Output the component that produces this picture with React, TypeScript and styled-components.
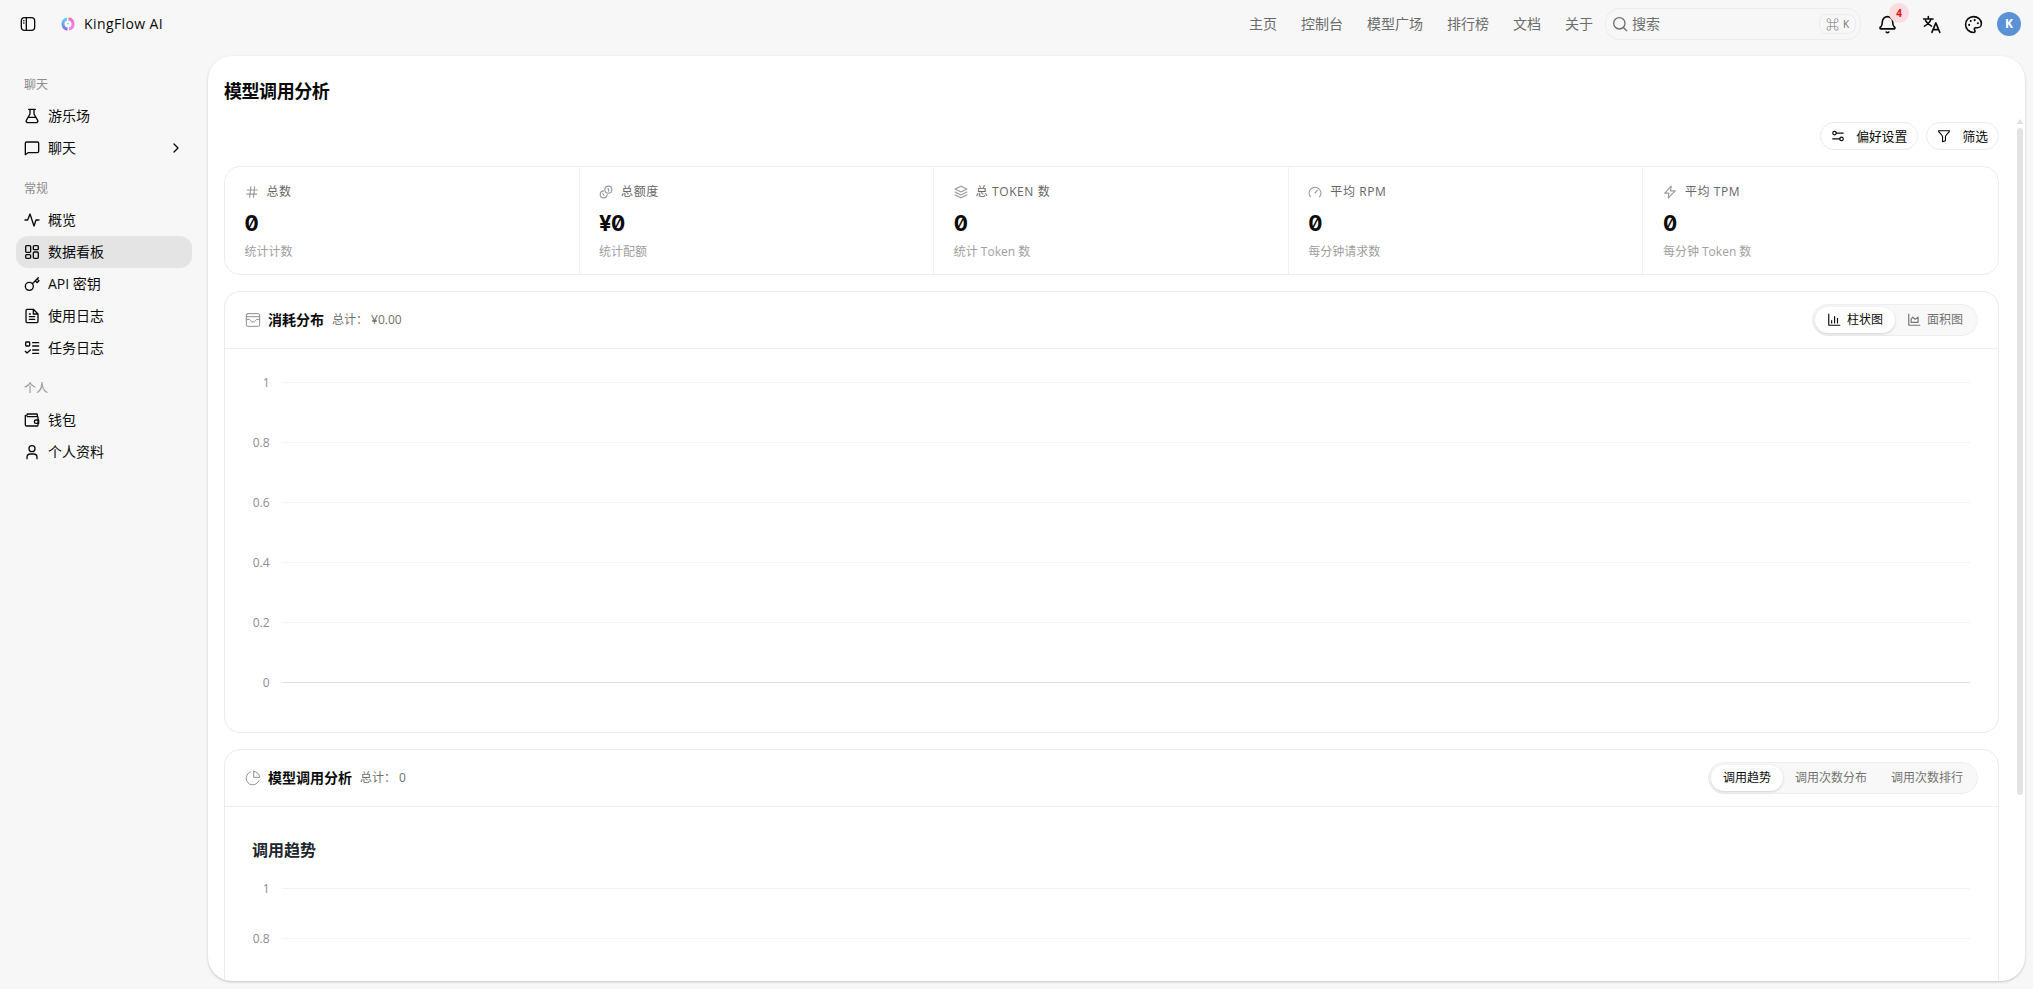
import React from 'react';
import styled, { createGlobalStyle } from 'styled-components';

const Global = createGlobalStyle`
  *{box-sizing:border-box}
  body{margin:0;background:#f7f7f7;color:#0a0a0a;font:14px/20px "Open Sans","Noto Sans CJK SC",sans-serif}
`;
const Shell = styled.div`
  width: 2033px;
  height: 989px;
  overflow: hidden;
  display: flex;
  flex-direction: column;
`;
const Header = styled.header`
  height: 48px;
  display: flex;
  align-items: center;
  padding: 0 12px 0 20px;
`;
const Brand = styled.div`
  display: flex;
  align-items: center;
  gap: 9px;
  margin-left: 25px;
  letter-spacing: 0.4px;
`;
const Nav = styled.nav`
  margin-left: auto;
  display: flex;
  gap: 24px;
  color: #6b6b6b;
`;
const Search = styled.div`
  display: flex;
  align-items: center;
  width: 256px;
  height: 32px;
  margin-left: 12px;
  padding: 0 4px 0 6px;
  gap: 4px;
  border: 1px solid #ececec;
  border-radius: 14px;
  color: #6f6f6f;
`;
const Kbd = styled.span`
  margin-left: auto;
  display: flex;
  align-items: center;
  justify-content: center;
  gap: 4px;
  width: 37px;
  height: 20px;
  border: 1px solid #ececec;
  border-radius: 8px;
  font-size: 10px;
`;
const Command = styled.span`
  font-size: 13px;
`;
const IconButton = styled.span<{ $w: number }>`
  position: relative;
  width: ${(p) => p.$w}px;
  display: flex;
  justify-content: center;
`;
const Badge = styled.span`
  position: absolute;
  left: 28px;
  top: -12px;
  width: 20px;
  height: 20px;
  border-radius: 50%;
  background: #f8dcdf;
  color: #e00b1b;
  font-size: 10px;
  font-weight: 700;
  text-align: center;
`;
const Avatar = styled.span`
  width: 24px;
  height: 24px;
  border-radius: 50%;
  background: #5b92d6;
  color: #fff;
  font-weight: 700;
  font-size: 12px;
  line-height: 24px;
  text-align: center;
`;
const Body = styled.div`
  flex: 1;
  display: flex;
  min-height: 0;
`;
const Sidebar = styled.aside`
  width: 208px;
  padding: 20px 16px;
  display: flex;
  flex-direction: column;
  gap: 8px;
`;
const GroupLabel = styled.div`
  height: 32px;
  line-height: 34px;
  padding-left: 8px;
  font-size: 12px;
  color: #8c8c8c;
`;
const MenuItem = styled.div<{ $active?: boolean }>`
  display: flex;
  align-items: center;
  gap: 8px;
  height: 32px;
  padding: 0 8px;
  border-radius: 12px;
  background: ${(p) => (p.$active ? '#e4e4e4' : 'transparent')};
  & > :nth-child(3) { margin-left: auto; }
`;
const Panel = styled.main`
  position: relative;
  width: 1817px;
  height: 925px;
  margin-top: 8px;
  border-radius: 24px;
  background: #fff;
  box-shadow: 0 1px 3px rgba(0, 0, 0, 0.14), 0 1px 2px rgba(0, 0, 0, 0.08);
  overflow: hidden;
  padding: 19px 26px 0 16px;
`;
const Title = styled.h1`
  margin: 0;
  font-size: 18px;
  line-height: 32px;
  font-weight: 700;
  letter-spacing: -0.45px;
`;
const Actions = styled.div`
  display: flex;
  justify-content: flex-end;
  gap: 7.500px;
  margin-top: 15px;
`;
const ActionButton = styled.span`
  height: 28px;
  display: flex;
  align-items: center;
  gap: 11.500px;
  padding: 0 10px;
  border: 1px solid #ebebeb;
  border-radius: 14px;
  font-size: 12.8px;
`;
const Stats = styled.section`
  display: grid;
  grid-template-columns: repeat(5, 1fr);
  height: 109px;
  margin-top: 16px;
  border: 1px solid #ededed;
  border-radius: 16px;
`;
const Stat = styled.div`
  padding: 15px 20px 0 19.500px;
  &:not(:last-child) { border-right: 1px solid #f1f1f1; }
`;
const StatLabel = styled.div`
  display: flex;
  align-items: center;
  gap: 8px;
  font-size: 12px;
  letter-spacing: 0.6px;
  color: #666;
  svg { color: #9a9a9a; }
`;
const StatValue = styled.div`
  margin-top: 7px;
  font: 700 22px/28px Inter, sans-serif;
  font-variant-numeric: tabular-nums slashed-zero;
  letter-spacing: -0.55px;
`;
const StatHint = styled.div`
  margin-top: 5px;
  font-size: 12px;
  color: #a0a0a0;
`;
const Card = styled.section<{ $h: number }>`
  height: ${(p) => p.$h}px;
  margin-top: 16px;
  border: 1px solid #ebebeb;
  border-radius: 16px;
`;
const CardHead = styled.div`
  height: 57px;
  display: flex;
  align-items: center;
  padding: 0 20px 0 19.500px;
  border-bottom: 1px solid #efefef;
  svg { color: #8f8f8f; }
`;
const CardTitle = styled.b`
  margin: 0 8px 0 7.500px;
`;
const Total = styled.span`
  font-size: 12px;
  color: #6f6f6f;
`;
const Tabs = styled.div`
  margin-left: auto;
  display: flex;
  height: 32px;
  padding: 2px;
  border: 1px solid #eee;
  border-radius: 16px;
  background: #f8f8f8;
`;
const Tab = styled.span<{ $active?: boolean }>`
  display: flex;
  align-items: center;
  gap: 6px;
  padding: 0 12px;
  border-radius: 14px;
  font-size: 12px;
  color: ${(p) => (p.$active ? '#0a0a0a' : '#737373')};
  background: ${(p) => (p.$active ? '#fff' : 'transparent')};
  box-shadow: ${(p) => (p.$active ? '0 1px 3px rgba(0,0,0,.16)' : 'none')};
  svg { color: currentColor; }
`;
const ChartTitle = styled.div`
  margin: 31px 0 0 27px;
  font-size: 16px;
  line-height: 24px;
  font-weight: 700;
  color: #21252c;
`;
const Axis = styled.div<{ $top: number }>`
  padding: ${(p) => p.$top}px 28px 0 20px;
`;
const AxisRow = styled.div<{ $h: number }>`
  height: ${(p) => p.$h}px;
  display: flex;
  align-items: center;
  gap: 12px;
  font-size: 12px;
  color: #8b8d92;
`;
const Tick = styled.span`
  width: 24.500px;
  padding-top: 1px;
  text-align: right;
`;
const GridLine = styled.i<{ $base?: boolean }>`
  flex: 1;
  height: 1px;
  background: ${(p) => (p.$base ? '#dedfe1' : '#f3f3f4')};
`;
const Scrollbar = styled.div`
  position: absolute;
  right: 2px;
  top: 63px;
  width: 6px;
  display: flex;
  flex-direction: column;
  align-items: center;
  gap: 4px;
`;
const ArrowUp = styled.i`
  border: 3px solid transparent;
  border-top: 0;
  border-bottom: 5px solid #dedede;
`;
const Thumb = styled.i`
  width: 6px;
  height: 667px;
  border-radius: 3px;
  background: #e3e3e3;
`;

/* 24-unit outline icons */
const shapes: Record<string, React.ReactNode> = {
  panel: <><rect x="2" y="2.500" width="20" height="19" rx="5" /><path d="M9.500 3v18M5.500 7h.5M5.500 10.500h.5" /></>,
  flask: <path d="M7 2h10M9 2v7L3.500 18.500C2.700 20.200 3.600 22 5.500 22h13c1.900 0 2.800-1.800 2-3.500L15 9V2M6.500 14h11" />,
  chat: <path d="M2 22V5a2 2 0 0 1 2-2h16a2 2 0 0 1 2 2v12a2 2 0 0 1-2 2H6z" />,
  chevron: <path d="m9 6 6 6-6 6" />,
  pulse: <path d="M1.500 12h4L9 3l6 18 3-9h4.500" />,
  dash: <><rect x="2.500" y="2.500" width="7.500" height="10" rx="1.500" /><rect x="14" y="2.500" width="7.500" height="6" rx="1.500" /><rect x="14" y="12" width="7.500" height="9.500" rx="1.500" /><rect x="2.500" y="16" width="7.500" height="5.500" rx="1.500" /></>,
  key: <><circle cx="8" cy="15.500" r="6" /><path d="m12.500 11.500 9-9M17 7l2.500 3L22.500 7 19.500 4.500" /></>,
  file: <path d="M14 2H5a2 2 0 0 0-2 2v16a2 2 0 0 0 2 2h14a2 2 0 0 0 2-2V9zM14 2v7h7M8 9h1.500M8 13h8M8 17h8" />,
  todo: <><rect x="2.500" y="3" width="6" height="6" rx="1" /><path d="m2 17 2.500 2.500L9.500 15M13 4h9M13 9h9M13 15h9M13 20h9" /></>,
  wallet: <><path d="M20 7V4a1 1 0 0 0-1-1H5a3 3 0 0 0 0 4h15a1 1 0 0 1 1 1v12a1 1 0 0 1-1 1H4a2 2 0 0 1-2-2V5" /><path d="M22 12h-4a2.500 2.500 0 0 0 0 5h4z" /></>,
  user: <><circle cx="12" cy="7" r="4.500" /><path d="M4.500 22v-2a5 5 0 0 1 5-5h5a5 5 0 0 1 5 5v2" /></>,
  search: <><circle cx="11" cy="11" r="8.500" /><path d="m17.500 17.500 4.500 4.500" /></>,
  bell: <path d="M10.300 21.500a2.500 2.500 0 0 0 3.400 0M3.300 15.300A1 1 0 0 0 4 17.500h16a1 1 0 0 0 .7-2.200C19.400 14 18.500 12.500 18.500 8.500a6.500 6.500 0 0 0-13 0c0 4-.9 5.500-2.200 6.800" />,
  lang: <path d="M2 5h12M8 2v3M11.500 5C10 9 7 12 3 14M4.500 7c1.500 3 4 5 7.500 7M12.500 22l5-12 5 12M14 18.500h7" />,
  palette: <><path d="M12 22a1 1 0 0 1 0-20c5.500 0 10 4 10 9a5 5 0 0 1-5 5h-2.250a1.750 1.750 0 0 0-1.400 2.800l.3.400A1.750 1.750 0 0 1 12 22z" /><path d="M13.500 6.500h.01M17.500 10.500h.01M6.500 12.500h.01M8.500 7.500h.01" strokeWidth="2.600" /></>,
  sliders: <><circle cx="6" cy="7" r="3" /><path d="M9 7h12M3 17h12" /><circle cx="18" cy="17" r="3" /></>,
  filter: <path d="M2.500 3h19c0 3-7 7-7 10v7l-5 2v-9c0-3-7-7-7-10z" />,
  hash: <path d="M4 8.500h17M3 15.500h17M10 3 8 21M16.500 3l-2 18" />,
  coins: <><circle cx="16" cy="8" r="6" /><path d="M15 6.500h1.500v4M8 10a6 6 0 1 0 6 7M6.500 14.500l2 3" /></>,
  layers: <path d="m12 2 10 5-10 5L2 7zM2 12l10 5 10-5M2 17l10 5 10-5" />,
  gauge: <path d="M4 20a10 10 0 1 1 16 0M12 14l4-5" />,
  zap: <path d="M14 2 3 14h7l-1 8 12-12h-8z" />,
  inbox: <><rect x="2" y="2.500" width="20" height="19" rx="2" /><path d="M2 7h20M2 11h4c2 0 2 4 6 4s4-4 6-4h4" /></>,
  bars: <path d="M3 2v18a1 1 0 0 0 1 1h18M8 17v-4M13 17V6M18 17V9" />,
  area: <path d="M3 2v18a1 1 0 0 0 1 1h18M7 16v-5l3-4 4 4 5-4v9z" />,
  pie: <path d="M8 3a10 10 0 1 0 13 13M13 2v9h9a9.500 9.500 0 0 0-9-9z" />,
};
const Glyph = ({ name, size = 16, stroke = 2 }: { name: string; size?: number; stroke?: number }) => (
  <svg width={size} height={size} viewBox="0 0 24 24" fill="none" stroke="currentColor" strokeWidth={stroke} strokeLinecap="round" strokeLinejoin="round">
    {shapes[name]}
  </svg>
);

const Logo = () => (
  <svg width="14" height="14" viewBox="0 0 14 14" fill="none" strokeWidth="3">
    <defs>
      <linearGradient id="cool" x1="0" y1="0" x2="0" y2="1"><stop stopColor="#54d3f5" /><stop offset="1" stopColor="#8a6cf0" /></linearGradient>
      <linearGradient id="warm" x1="0" y1="0" x2="0" y2="1"><stop stopColor="#f472b8" /><stop offset="1" stopColor="#e58af0" /></linearGradient>
    </defs>
    <path d="M6 2C3.500 2.300 2 4.600 2 7s1.600 4.600 4.500 5.300" stroke="url(#cool)" />
    <path d="M7.500 1.700C10.400 2.200 12 4.500 12 7s-1.500 4.700-4 5" stroke="url(#warm)" />
    <circle cx="7" cy="6.800" r="0.800" fill="#62c8ef" />
  </svg>
);

const groups = [
  { label: '聊天', items: [['flask', '游乐场'], ['chat', '聊天']] },
  { label: '常规', items: [['pulse', '概览'], ['dash', '数据看板'], ['key', 'API 密钥'], ['file', '使用日志'], ['todo', '任务日志']] },
  { label: '个人', items: [['wallet', '钱包'], ['user', '个人资料']] },
];
const stats = [
  ['hash', '总数', '0', '统计计数'],
  ['coins', '总额度', '¥0', '统计配额'],
  ['layers', '总 TOKEN 数', '0', '统计 Token 数'],
  ['gauge', '平均 RPM', '0', '每分钟请求数'],
  ['zap', '平均 TPM', '0', '每分钟 Token 数'],
];
const ticks = ['1', '0.8', '0.6', '0.4', '0.2', '0'];

const Chart = ({ top, step, values }: { top: number; step: number; values: string[] }) => (
  <Axis $top={top}>
    {values.map((v) => (
      <AxisRow key={v} $h={step}><Tick>{v}</Tick><GridLine $base={v === '0'} /></AxisRow>
    ))}
  </Axis>
);

export default function App() {
  return (
    <Shell>
      <Global />
      <Header>
        <Glyph name="panel" />
        <Brand><Logo />KingFlow AI</Brand>
        <Nav>{['主页', '控制台', '模型广场', '排行榜', '文档', '关于'].map((t) => <span key={t}>{t}</span>)}</Nav>
        <Search><Glyph name="search" />搜索<Kbd><Command>⌘</Command><span>K</span></Kbd></Search>
        <IconButton $w={52}><Glyph name="bell" size={19} /><Badge>4</Badge></IconButton>
        <IconButton $w={36}><Glyph name="lang" size={19} /></IconButton>
        <IconButton $w={48}><Glyph name="palette" size={19} /></IconButton>
        <Avatar>K</Avatar>
      </Header>
      <Body>
        <Sidebar>
          {groups.map((g) => (
            <div key={g.label}>
              <GroupLabel>{g.label}</GroupLabel>
              {g.items.map(([icon, text]) => (
                <MenuItem key={text} $active={icon === 'dash'}>
                  <Glyph name={icon} /><span>{text}</span>{icon === 'chat' && <Glyph name="chevron" />}
                </MenuItem>
              ))}
            </div>
          ))}
        </Sidebar>
        <Panel>
          <Title>模型调用分析</Title>
          <Actions>
            <ActionButton><Glyph name="sliders" size={14} />偏好设置</ActionButton>
            <ActionButton><Glyph name="filter" size={14} />筛选</ActionButton>
          </Actions>
          <Stats>
            {stats.map(([icon, label, value, hint]) => (
              <Stat key={label}>
                <StatLabel><Glyph name={icon} size={14} />{label}</StatLabel>
                <StatValue>{value}</StatValue>
                <StatHint>{hint}</StatHint>
              </Stat>
            ))}
          </Stats>
          <Card $h={442}>
            <CardHead>
              <Glyph name="inbox" stroke={1.5} /><CardTitle>消耗分布</CardTitle><Total>总计： ¥0.00</Total>
              <Tabs>
                <Tab $active><Glyph name="bars" size={14} />柱状图</Tab>
                <Tab><Glyph name="area" size={14} />面积图</Tab>
              </Tabs>
            </CardHead>
            <Chart top={3.5} step={60} values={ticks} />
          </Card>
          <Card $h={442}>
            <CardHead>
              <Glyph name="pie" stroke={1.5} /><CardTitle>模型调用分析</CardTitle><Total>总计： 0</Total>
              <Tabs>
                <Tab $active>调用趋势</Tab><Tab>调用次数分布</Tab><Tab>调用次数排行</Tab>
              </Tabs>
            </CardHead>
            <ChartTitle>调用趋势</ChartTitle>
            <Chart top={1.5} step={50} values={ticks.slice(0, 2)} />
          </Card>
          <Scrollbar><ArrowUp /><Thumb /></Scrollbar>
        </Panel>
      </Body>
    </Shell>
  );
}
